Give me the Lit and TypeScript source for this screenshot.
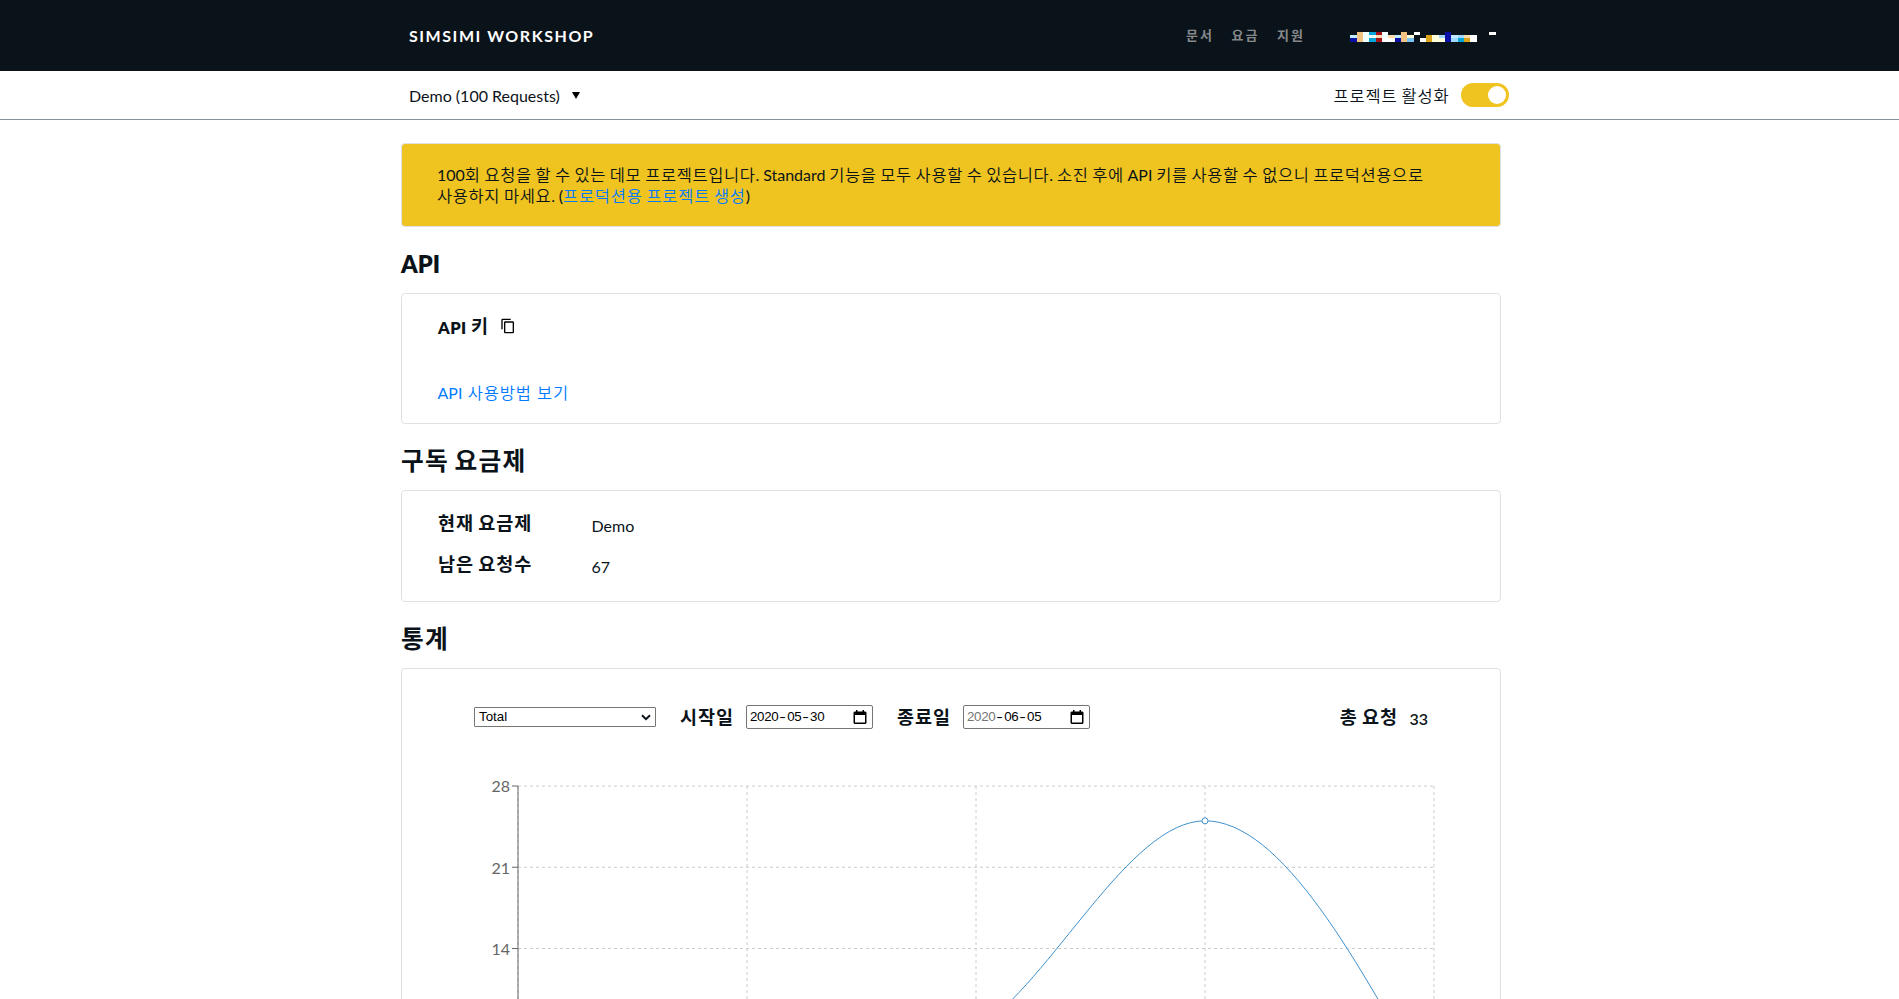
import { LitElement, html, svg, css } from "lit";
import { customElement } from "lit/decorators.js";

// Wraps Hangul runs so they can be tracked separately from Latin text.
const ko = (text: string) =>
  text
    .split(/([\uac00-\ud7a3]+)/)
    .map((part, i) => (i % 2 ? html`<span class="ko">${part}</span>` : part));

const WHITE = "#ffffff", AZURE = "#f0ffff", ICE = "#c0eaff", SKY = "#a0d8ff", CYAN = "#08a5da";
const NAVY = "#0a10a5", ORANGE = "#f0c383", PEACH = "#ffdcb0", CREAM = "#ffffdc", GOLD = "#daa31a", RED = "#a31219";

const COLUMN_EDGES = [0, 7, 13, 19, 26, 32, 38, 45, 51, 57, 64, 70, 76, 82, 89, 95, 101, 108, 114, 120, 127];
const COLUMNS = [
  ["", ICE, NAVY], [ORANGE, ORANGE, ORANGE], [AZURE, AZURE, AZURE], [CYAN, AZURE, CYAN], [RED, PEACH, RED],
  [AZURE, AZURE, WHITE], ["", PEACH, WHITE], ["", ICE, NAVY], [ORANGE, ORANGE, ORANGE], ["", CREAM, "#78c3f3"],
  [WHITE, "", ""], ["", "", WHITE], ["", GOLD, GOLD], ["", CREAM, CREAM], ["", SKY, CREAM],
  [NAVY, NAVY, NAVY], ["", ICE, SKY], ["", SKY, CYAN], ["", PEACH, GOLD], ["", WHITE, WHITE],
];
const ROW_EDGES = [0, 3, 6, 10];

const VALUES = [0, 0, 7, 25, 1];
const X = (i: number) => 518 + i * 229;
const Y = (v: number) => 1111 - (v * 325) / 28;

// Monotone cubic path through evenly spaced points.
function monotone(values: number[]) {
  const d = values.slice(1).map((v, i) => v - values[i]);
  const m = values.map((_, i) => {
    if (i === 0 || i === values.length - 1) return 0;
    const a = d[i - 1], b = d[i];
    return (Math.sign(a) + Math.sign(b)) * Math.min(Math.abs(a), Math.abs(b), Math.abs(a + b) / 4);
  });
  m[0] = (3 * d[0] - m[1]) / 2;
  m[m.length - 1] = (3 * d[d.length - 1] - m[m.length - 2]) / 2;
  let path = `M${X(0)},${Y(values[0])}`;
  for (let i = 0; i < d.length; i++) {
    path += `C${X(i + 1 / 3)},${Y(values[i] + m[i] / 3)},${X(i + 2 / 3)},${Y(values[i + 1] - m[i + 1] / 3)},${X(i + 1)},${Y(values[i + 1])}`;
  }
  return path;
}

@customElement("app-root")
export class AppRoot extends LitElement {
  static styles = css`
    * { box-sizing: border-box; }
    :host {
      display: block;
      height: 100vh;
      overflow: hidden;
      background: #fff;
      color: #0b131a;
      font: 400 16px/20px Lato, "Noto Sans CJK KR", sans-serif;
    }
    .ko { font-family: "Noto Sans CJK KR", sans-serif; font-size: 1.03em; line-height: 0; letter-spacing: 0.05em; font-weight: 350; }
    a { color: #007bff; text-decoration: none; }
    .nav { height: 71px; background: #0b131a; padding: 0 390px 0 409px; display: flex; align-items: flex-start; }
    .brand { margin-top: 26px; color: #fff; font-weight: 700; letter-spacing: 1.55px; flex: 1; }
    .links { display: flex; gap: 17.5px; margin: 25px 45px 0 0; }
    .link { color: #85898c; font-size: 13px; width: 28px; white-space: nowrap; }
    .link .ko { font-size: 13px; letter-spacing: 2px; font-weight: 600; }
    .account { margin-top: 32px; width: 159px; height: 10px; }
    .account svg, .chart { display: block; }
    .bar { height: 49px; border-bottom: 1px solid #868e96; padding: 0 390px 0 409px; display: flex; align-items: flex-start; }
    .project { margin-top: 15px; flex: 1; display: flex; }
    .caret { margin: 6px 0 0 12px; border: 4.5px solid transparent; border-top: 7px solid #000; border-bottom: 0; height: 7px; }
    .active { margin: 15px 11.5px 0 0; }
    .toggle { margin-top: 12px; width: 48px; height: 24px; border-radius: 12px; background: #efc320; padding: 3px; display: flex; justify-content: flex-end; }
    .knob { width: 18px; height: 18px; border-radius: 50%; background: #fff; }
    .page { width: 1100px; margin: 23px 0 0 401px; }
    .card { border: 1px solid #dee2e6; border-radius: 4px; }
    .notice { background: #efc320; height: 84px; padding: 20px 35px; line-height: 21px; white-space: nowrap; word-spacing: -.35px; }
    .notice .ko { letter-spacing: .038em; }
    .notice a .ko { letter-spacing: .047em; }
    .title { font-size: 24px; line-height: 29px; font-weight: 800; margin: 22px 0 15px; }
    .heading { font-size: 23.5px; padding-top: 1px; margin-bottom: 14px; }
    .title .ko, .label .ko { font-weight: 700; }
    .label { font-size: 18px; line-height: 22px; font-weight: 700; white-space: nowrap; }
    .label .ko { vertical-align: 1px; }
    .filters .label .ko { vertical-align: 0; }
    .api { height: 131px; padding: 22px 36px; }
    .key { display: flex; }
    .latin { font-size: 16.5px; font-weight: 800; letter-spacing: .4px; }
    .copy { margin: 2px 0 0 11.5px; }
    .usage { margin: 44px 0 0 -0.5px; word-spacing: 1.2px; }
    .plan { height: 112px; padding: 22px 36px; display: grid; grid-template-columns: 153.5px 1fr; grid-auto-rows: 41px; }
    .value { padding-top: 3px; }
    .stats { height: 480px; padding-top: 36px; }
    .filters { display: flex; align-items: center; height: 24px; padding: 0 72px; }
    .select { width: 182px; height: 20px; border: 1px solid #767676; border-radius: 1px; background: #fff; display: flex; align-items: center; justify-content: space-between; padding: 0 4px; font: 13.33px/16px "Liberation Sans", sans-serif; color: #000; }
    .start { margin-left: 24px; width: 66px; }
    .end { margin-left: 24px; width: 66px; }
    .date { width: 127px; height: 24px; border: 1px solid #767676; border-radius: 2px; display: flex; align-items: center; justify-content: space-between; padding: 0 5px 1px 3px; font: 13.33px/16px "Liberation Sans", sans-serif; color: #000; letter-spacing: -.3px; }
    .date svg { margin-top: 1px; }
    .dash { display: inline-block; width: 8.7px; text-align: center; transform: scaleX(1.5); }
    .dim { color: #757575; }
    .total { margin-left: auto; display: flex; }
    .count { padding: 2px 0 0 11.5px; font-weight: 600; line-height: 22px; height: 22px; }
    .chart { margin-top: 23px; }
    .tick { font: 16px Lato, sans-serif; fill: #666; text-anchor: end; }
  `;

  date(year: string, month: string, day: string, dim = false) {
    return html`<div class="date">
      <span><span class=${dim ? "dim" : ""}>${year}</span><span class="dash">-</span>${month}<span class="dash">-</span>${day}</span>
      <svg width="14" height="15" viewBox="0 0 14 15"><path d="M1.500 1.500H3V0h1.500v1.500h5V0H11v1.500h1.500l1 1V13l-1 1h-11l-1-1V2.500zM2 5v7.600h10V5z" fill="#000" fill-rule="evenodd"/></svg>
    </div>`;
  }

  render() {
    return html`
      <header class="nav">
        <div class="brand">SIMSIMI WORKSHOP</div>
        <nav class="links">${["문서", "요금", "지원"].map((t) => html`<span class="link">${ko(t)}</span>`)}</nav>
        <div class="account">
          <svg width="159" height="10" shape-rendering="crispEdges">
            ${COLUMNS.map((col, i) => col.map((c, r) => c ? svg`<rect x=${COLUMN_EDGES[i]} y=${ROW_EDGES[r]} width=${COLUMN_EDGES[i + 1] - COLUMN_EDGES[i]} height=${ROW_EDGES[r + 1] - ROW_EDGES[r]} fill=${c}/>` : ""))}
            <rect x="139" y="0" width="7" height="3" fill="#fff"/>
          </svg>
        </div>
      </header>
      <div class="bar">
        <div class="project">Demo (100 Requests)<i class="caret"></i></div>
        <div class="active">${ko("프로젝트 활성화")}</div>
        <div class="toggle"><i class="knob"></i></div>
      </div>
      <main class="page">
        <div class="card notice">
          ${ko("100회 요청을 할 수 있는 데모 프로젝트입니다. Standard 기능을 모두 사용할 수 있습니다. 소진 후에 API 키를 사용할 수 없으니 프로덕션용으로")}<br>${ko("사용하지 마세요. (")}<a>${ko("프로덕션용 프로젝트 생성")}</a>)
        </div>
        <h2 class="title heading">API</h2>
        <div class="card api">
          <div class="key"><span class="label"><span class="latin">API</span>${ko(" 키")}</span>
            <svg class="copy" width="16" height="16" viewBox="0 0 24 24"><path d="M16 1H4c-1.1 0-2 .9-2 2v14h2V3h12V1zm3 4H8c-1.1 0-2 .9-2 2v14c0 1.1.9 2 2 2h11c1.1 0 2-.9 2-2V7c0-1.1-.9-2-2-2zm0 16H8V7h11v14z" fill="#000"/></svg>
          </div>
          <div class="usage"><a>${ko("API 사용방법 보기")}</a></div>
        </div>
        <h2 class="title">${ko("구독 요금제")}</h2>
        <div class="card plan">
          <div class="label">${ko("현재 요금제")}</div><div class="value">Demo</div>
          <div class="label">${ko("남은 요청수")}</div><div class="value">67</div>
        </div>
        <h2 class="title">${ko("통계")}</h2>
        <div class="card stats">
          <div class="filters">
            <div class="select">Total<svg width="10" height="7" viewBox="0 0 10 7"><path d="M1 1.2 5 5.2 9 1.2" fill="none" stroke="#0b131a" stroke-width="2"/></svg></div>
            <div class="label start">${ko("시작일")}</div>${this.date("2020", "05", "30")}
            <div class="label end">${ko("종료일")}</div>${this.date("2020", "06", "05", true)}
            <div class="total"><span class="label">${ko("총 요청")}</span><span class="count">33</span></div>
          </div>
          <svg class="chart" width="1098" height="400" viewBox="402 752 1098 400">
            <g stroke="#ccc" stroke-dasharray="3 3">
              ${[28, 21, 14, 7, 0].map((v) => svg`<line x1="518" x2="1434" y1=${Y(v)} y2=${Y(v)}/>`)}
              ${[0, 1, 2, 3, 4].map((i) => svg`<line x1=${X(i)} x2=${X(i)} y1="786" y2="1111"/>`)}
            </g>
            <path d="M518 786V1111" stroke="#666"/>
            ${[28, 21, 14].map((v) => svg`<line x1="512" x2="518" y1=${Y(v)} y2=${Y(v)} stroke="#666"/><text class="tick" x="510" y=${Y(v) + 6.4}>${v}</text>`)}
            <path d=${monotone(VALUES)} fill="none" stroke="#3f91cc"/>
            <circle cx="1205" cy=${Y(25)} r="3" fill="#fff" stroke="#3f91cc"/>
          </svg>
        </div>
      </main>
    `;
  }
}
